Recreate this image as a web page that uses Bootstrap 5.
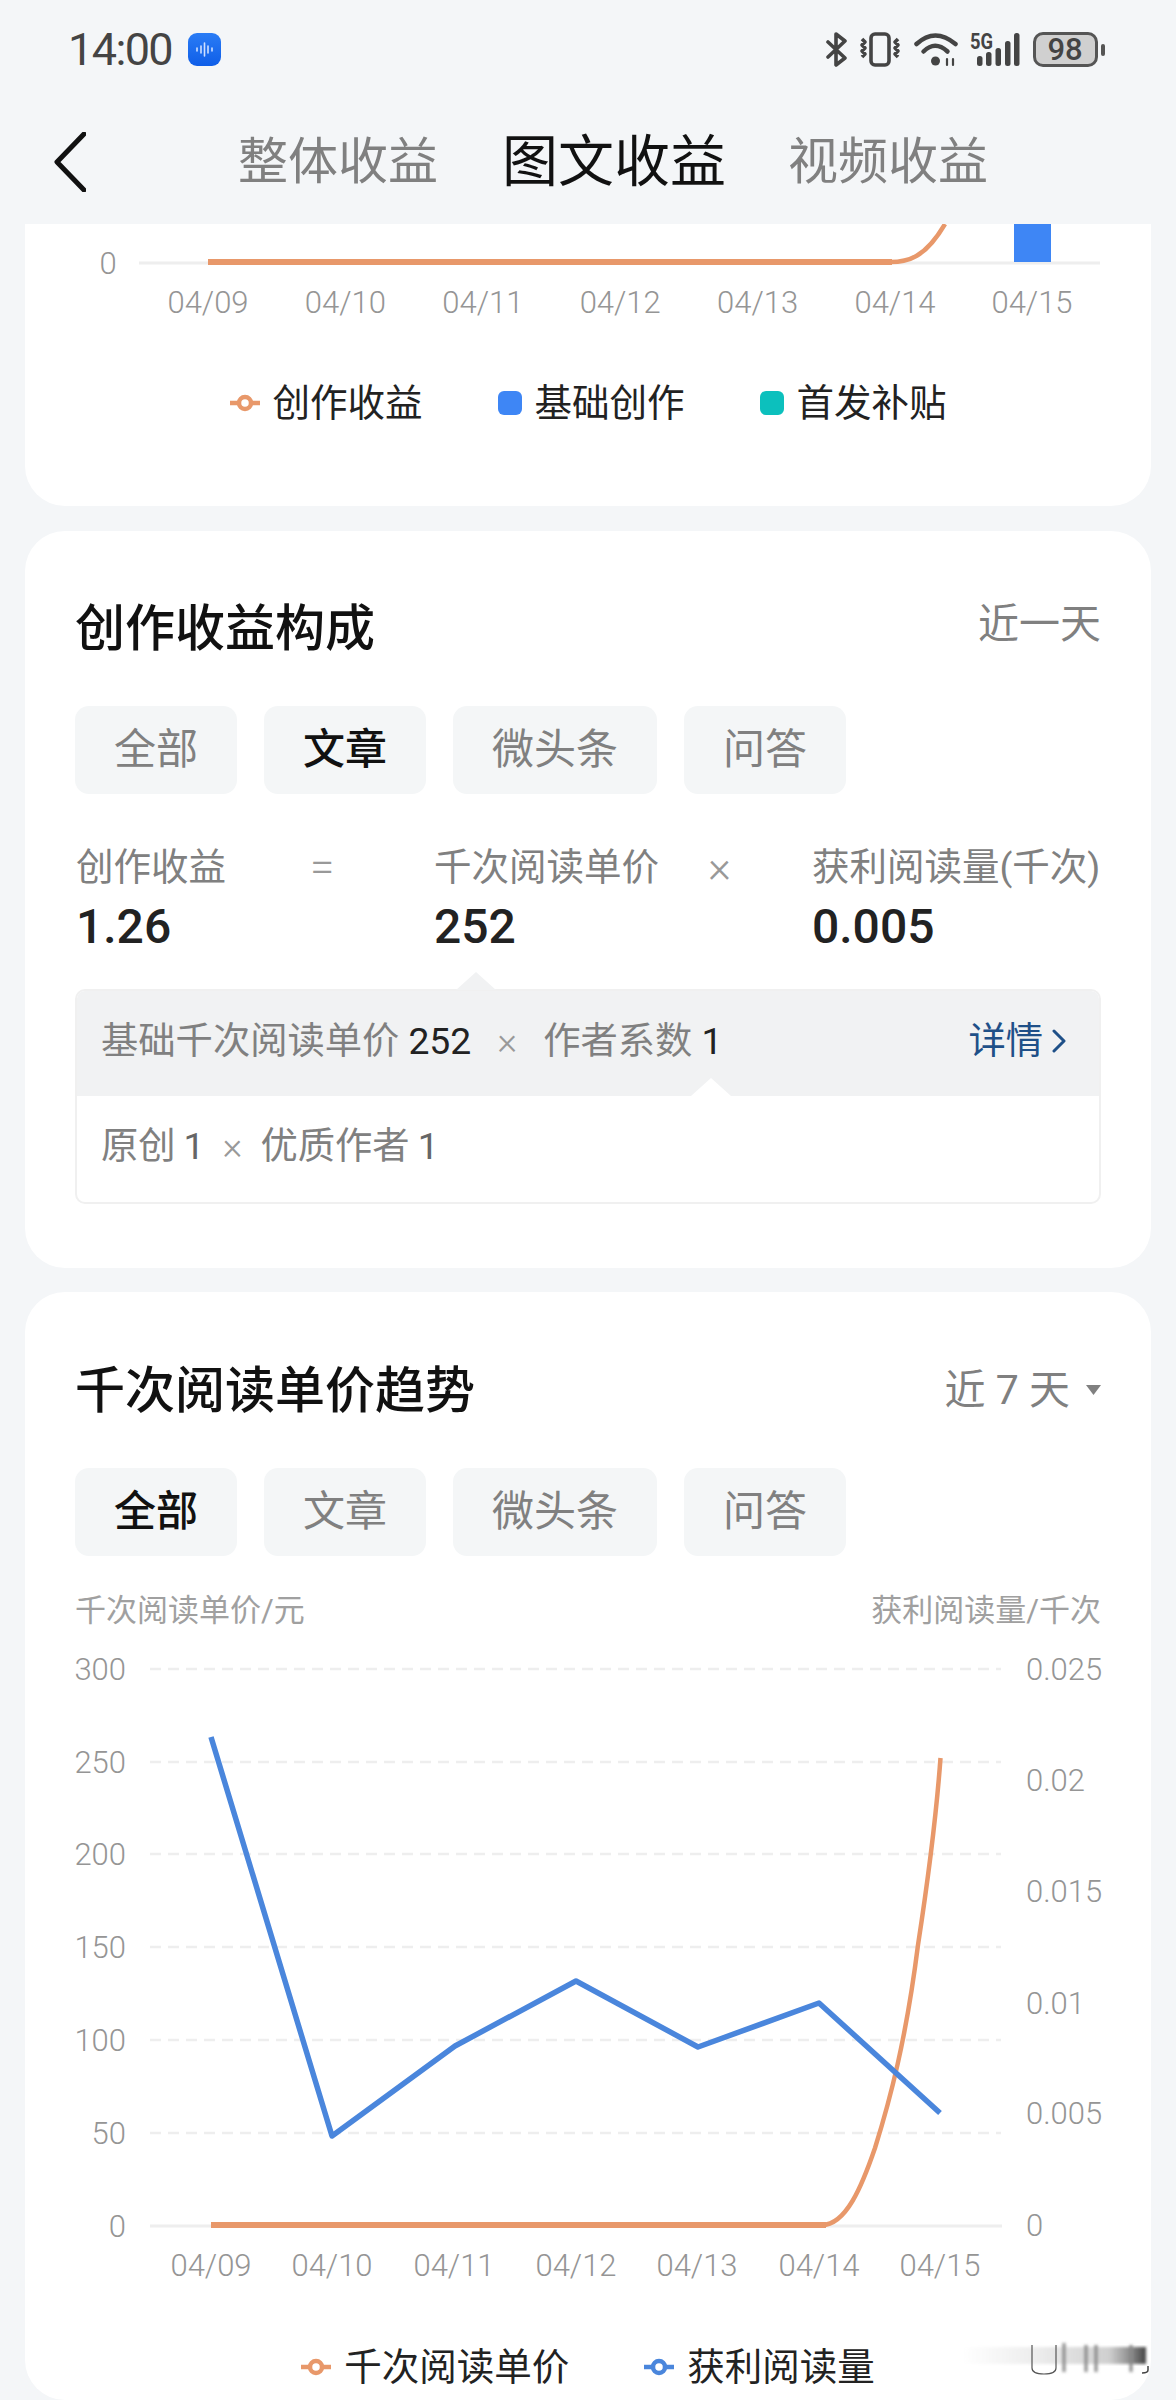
<!DOCTYPE html>
<html lang="zh-CN">
<head>
    <meta charset="UTF-8">
    <meta name="viewport" content="width=device-width, initial-scale=1.0">
    <title>图文收益</title>
    <link href="https://cdn.jsdelivr.net/npm/bootstrap@5.3.0/dist/css/bootstrap.min.css" rel="stylesheet">
    <style>
        body {
            width: 1176px;
            height: 2400px;
            overflow: hidden;
            background: #f4f6f8;
            font-family: Roboto, "Noto Sans CJK SC", sans-serif;
            color: #808080;
        }
        .status-row { height: 100px; padding: 32px 71px 0 68px; }
        .clock { font-size: 45px; line-height: 35px; color: #444; letter-spacing: -1.6px; margin-right: 16px; }
        .voice-dot { width: 33px; height: 33px; border-radius: 9px; background: linear-gradient(180deg, #2a7cf5, #0f5ee8); }
        .status-icons { gap: 12.5px; }
        .signal-icon { margin-top: -6px; }
        .batt-body {
            width: 65px; height: 35px; border: 3px solid #555; border-radius: 10px;
            background: #d0d0d0; color: #444; font-size: 31px; font-weight: 500; line-height: 1;
        }
        .batt-nub { width: 4px; height: 12px; border-radius: 2px; background: #555; margin-left: -9px; }
        .head-row { height: 124px; padding-left: 54px; }
        .back-btn { width: 32px; margin-right: 152px; }
        .tab-item { font-size: 50px; line-height: 60px; color: #808080; margin-right: 63px; }
        .tab-on { font-size: 56px; color: #111; margin-left: 1px; margin-right: 62px; }
        .panel { margin: 0 25px 24px; border-radius: 40px; background: #fff; }
        .panel-top { height: 282px; border-radius: 0 0 40px 40px; margin-bottom: 25px; }
        .panel-mid { height: 737px; padding: 67px 50px 0; }
        .panel-end { padding: 68px 50px 0; height: 1108px; margin-bottom: 0; }
        .chart-svg { display: block; }
        .chart-top { height: 154px; }
        .axis-txt { font-size: 31px; fill: #959595; font-family: Roboto, sans-serif; font-weight: 300; }
        .legend-row { height: 50px; gap: 75px; font-size: 37.5px; line-height: 50px; color: #222; }
        .legend-item { gap: 13px; }
        .legend-sq { width: 24px; height: 24px; border-radius: 6px; }
        .title-row { height: 60px; }
        .sec-title { font-size: 50px; line-height: 60px; font-weight: 500; color: #111; padding-top: 2px; }
        .range-txt { font-size: 41px; line-height: 50px; color: #808080; }
        .range-caret { width: 15px; height: 10px; margin-left: 16px; }
        .pill-row { gap: 27px; margin-top: 48px; }
        .pill-btn {
            height: 88px; padding: 0 39px; border: 0; border-radius: 14px;
            background: #f4f6f7; color: #808080; font-size: 42px; line-height: 88px;
        }
        .pill-on { color: #111; font-weight: 500; }
        .formula-grid {
            display: grid;
            grid-template-columns: 234px 124px 274px 104px 1fr;
            margin-top: 48px;
            margin-left: 1px;
            font-size: 37.5px;
            line-height: 50px;
            color: #808080;
        }
        .formula-op { font-size: 44px; font-weight: 300; color: #999; }
        .formula-num { font-size: 48px; line-height: 60px; font-weight: 500; color: #222; margin-top: 5px; }
        .detail-box {
            margin-top: 32px;
            border: 2px solid #f0f0f0;
            border-radius: 10px;
            font-size: 37.3px;
            line-height: 50px;
            color: #808080;
        }
        .box-top { height: 105px; padding: 0 33px 6px 24px; background: #f1f2f3; border-radius: 8px 8px 0 0; }
        .box-low { height: 106px; padding: 0 24px 6px; }
        .box-num { color: #222; margin-left: 9px; }
        .box-num-soft { color: #666; margin-left: 8px; }
        .box-times { color: #999; margin: 0 26px; font-size: 38px; font-weight: 300; }
        .box-times-sm { margin: 0 18px; }
        .more-link { color: #1f5088; text-decoration: none; }
        .notch-up {
            position: absolute; left: 379px; top: -19px; width: 40px; height: 18px;
            background: #f1f2f3; clip-path: polygon(50% 0, 100% 100%, 0 100%);
        }
        .notch-in {
            position: absolute; left: 614px; top: 87px; width: 40px; height: 18px;
            background: #fff; clip-path: polygon(50% 0, 100% 100%, 0 100%);
        }
        .axis-title { margin-top: 35px; height: 40px; font-size: 31px; line-height: 40px; color: #a0a0a0; }
        .chart-end { height: 711px; margin-left: -50px; }
        .blur-mark { position: absolute; left: 960px; top: 2340px; }
    </style>
</head>
<body class="position-relative">

    <div class="status-row d-flex justify-content-between align-items-start">
        <div class="d-flex align-items-center">
            <span class="clock">14:00</span>
            <span class="voice-dot d-flex align-items-center justify-content-center">
                <svg width="19" height="17" viewBox="0 0 19 17" stroke="#cfe0ff" stroke-width="1.600" stroke-linecap="round">
                    <path d="M2 7v3M6 5v7M9.500 2v13M13 5v7M17 7v3"/>
                </svg>
            </span>
        </div>
        <div class="status-icons d-flex align-items-end">
            <svg width="21" height="35" viewBox="0 0 21 35" fill="none" stroke="#444" stroke-width="3.600" stroke-linecap="round" stroke-linejoin="round">
                <path d="M2 10 L19 26 L10 33 V2 L19 9 L2 25"/>
            </svg>
            <svg width="42" height="35" viewBox="0 0 42 35" fill="none" stroke="#444" stroke-width="3.600" stroke-linejoin="round">
                <rect x="12" y="2" width="18" height="31" rx="4"/>
                <path d="M3 7l3 3-3 3 3 3-3 3 3 3-3 3M39 7l-3 3 3 3-3 3 3 3-3 3 3 3"/>
            </svg>
            <svg width="44" height="35" viewBox="0 0 44 35" fill="none" stroke="#444" stroke-width="4.500" stroke-linecap="round">
                <path d="M2.500 12 Q21 -5 41.500 12"/>
                <path d="M9.500 19.500 Q21 8 33.500 19.500"/>
                <circle cx="21.500" cy="29" r="4.500" fill="#444" stroke="none"/>
                <path d="M33 27v6M39 27v6" stroke-width="2.200"/>
            </svg>
            <svg class="signal-icon" width="50" height="41" viewBox="0 -6 50 41" fill="#444">
                <text x="0" y="17" font-family="Roboto, sans-serif" font-size="22" font-weight="700" textLength="23" lengthAdjust="spacingAndGlyphs">5G</text>
                <rect x="7" y="24" width="5.500" height="10" rx="2.500"/>
                <rect x="16" y="20" width="5.500" height="14" rx="2.500"/>
                <rect x="25.500" y="16" width="5.500" height="18" rx="2.500"/>
                <rect x="35" y="9" width="5.500" height="25" rx="2.500"/>
                <rect x="44" y="1" width="5.500" height="33" rx="2.500"/>
            </svg>
            <span class="batt-body d-flex align-items-center justify-content-center">98</span>
            <span class="batt-nub align-self-center"></span>
        </div>
    </div>

    <div class="head-row d-flex align-items-center">
        <svg class="back-btn" height="60" viewBox="0 0 32 60" fill="none" stroke="#111" stroke-width="5" stroke-linecap="round" stroke-linejoin="round">
            <path d="M30 2 L3 30 L30 58"/>
        </svg>
        <span class="tab-item">整体收益</span>
        <span class="tab-item tab-on">图文收益</span>
        <span class="tab-item">视频收益</span>
    </div>

    <div class="card panel panel-top border-0 d-block overflow-hidden">
        <svg class="chart-svg chart-top" width="1125" height="154" viewBox="25 224 1125 154" fill="none">
            <line x1="139" y1="263" x2="1100" y2="263" stroke="#eeeeee" stroke-width="3"/>
            <rect x="1014" y="224" width="37" height="38" fill="#3e86f5"/>
            <path d="M208 262 H892" stroke="#e8986a" stroke-width="6"/>
            <path d="M890 262 C908 262 925 258 945 224" stroke="#e8986a" stroke-width="4.500"/>
            <text class="axis-txt" x="108" y="274" text-anchor="middle">0</text>
            <text class="axis-txt" x="208" y="313" text-anchor="middle">04/09</text>
            <text class="axis-txt" x="345.400" y="313" text-anchor="middle">04/10</text>
            <text class="axis-txt" x="482.800" y="313" text-anchor="middle">04/11</text>
            <text class="axis-txt" x="620.200" y="313" text-anchor="middle">04/12</text>
            <text class="axis-txt" x="757.600" y="313" text-anchor="middle">04/13</text>
            <text class="axis-txt" x="895" y="313" text-anchor="middle">04/14</text>
            <text class="axis-txt" x="1032" y="313" text-anchor="middle">04/15</text>
        </svg>
        <div class="legend-row d-flex justify-content-center">
            <div class="legend-item d-flex align-items-center">
                <svg width="30" height="18" viewBox="0 0 30 18" fill="#fff" stroke="#e8986a" stroke-width="4.500">
                    <path d="M0 9H30"/><circle cx="15" cy="9" r="6"/>
                </svg>
                创作收益
            </div>
            <div class="legend-item d-flex align-items-center">
                <span class="legend-sq" style="background:#3e86f5"></span>基础创作
            </div>
            <div class="legend-item d-flex align-items-center">
                <span class="legend-sq" style="background:#0cc0bd"></span>首发补贴
            </div>
        </div>
    </div>

    <div class="card panel panel-mid border-0 d-block">
        <div class="title-row d-flex justify-content-between align-items-center">
            <div class="sec-title">创作收益构成</div>
            <div class="range-txt mb-2">近一天</div>
        </div>
        <div class="pill-row d-flex">
            <button class="btn pill-btn">全部</button>
            <button class="btn pill-btn pill-on">文章</button>
            <button class="btn pill-btn">微头条</button>
            <button class="btn pill-btn">问答</button>
        </div>
        <div class="formula-grid">
            <div>创作收益</div><div class="formula-op">=</div><div>千次阅读单价</div><div class="formula-op">×</div><div class="text-nowrap">获利阅读量(千次)</div>
            <div class="formula-num">1.26</div><div></div><div class="formula-num">252</div><div></div><div class="formula-num">0.005</div>
        </div>
        <div class="detail-box position-relative">
            <span class="notch-up"></span>
            <div class="box-top d-flex align-items-center">
                <span>基础千次阅读单价</span><span class="box-num">252</span>
                <span class="box-times">×</span>
                <span>作者系数</span><span class="box-num">1</span>
                <a class="more-link ms-auto d-flex align-items-center gap-2" href="#">详情
                    <svg width="15" height="24" viewBox="0 0 15 24" fill="none" stroke="#1f5088" stroke-width="3" stroke-linecap="round" stroke-linejoin="round">
                        <path d="M3 2 L13 12 L3 22"/>
                    </svg>
                </a>
            </div>
            <span class="notch-in"></span>
            <div class="box-low d-flex align-items-center">
                <span>原创</span><span class="box-num-soft">1</span>
                <span class="box-times box-times-sm">×</span>
                <span>优质作者</span><span class="box-num-soft">1</span>
            </div>
        </div>
    </div>

    <div class="card panel panel-end border-0 d-block">
        <div class="title-row d-flex justify-content-between align-items-center">
            <div class="sec-title">千次阅读单价趋势</div>
            <div class="range-txt d-flex align-items-center">近 7 天
                <svg class="range-caret" viewBox="0 0 15 10" fill="#808080"><path d="M0 0H15L7.500 10Z"/></svg>
            </div>
        </div>
        <div class="pill-row d-flex">
            <button class="btn pill-btn pill-on">全部</button>
            <button class="btn pill-btn">文章</button>
            <button class="btn pill-btn">微头条</button>
            <button class="btn pill-btn">问答</button>
        </div>
        <div class="axis-title d-flex justify-content-between">
            <span>千次阅读单价/元</span><span>获利阅读量/千次</span>
        </div>
        <svg class="chart-svg chart-end" width="1125" height="711" viewBox="25 1631 1125 711" fill="none">
            <g stroke="#eeeeee" stroke-width="2.500" stroke-dasharray="11 7">
                <line x1="150" y1="1669" x2="1001" y2="1669"/>
                <line x1="150" y1="1762" x2="1001" y2="1762"/>
                <line x1="150" y1="1854" x2="1001" y2="1854"/>
                <line x1="150" y1="1947" x2="1001" y2="1947"/>
                <line x1="150" y1="2040" x2="1001" y2="2040"/>
                <line x1="150" y1="2133" x2="1001" y2="2133"/>
            </g>
            <line x1="150" y1="2226" x2="1002" y2="2226" stroke="#eeeeee" stroke-width="3"/>
            <path d="M822 2225 C846 2225 862 2186 875 2148 C890 2100 906 2040 918 1945 C928 1880 936 1820 940.500 1758" stroke="#e8986a" stroke-width="4.500"/>
            <path d="M211 2225 H826" stroke="#e8986a" stroke-width="6"/>
            <polyline points="211,1737 332,2136 455,2046 576,1981 698,2047 819,2003 940,2113" stroke="#4a86dc" stroke-width="5.500" stroke-linejoin="round"/>
            <g text-anchor="end">
                <text class="axis-txt" x="126" y="1680">300</text>
                <text class="axis-txt" x="126" y="1773">250</text>
                <text class="axis-txt" x="126" y="1865">200</text>
                <text class="axis-txt" x="126" y="1958">150</text>
                <text class="axis-txt" x="126" y="2051">100</text>
                <text class="axis-txt" x="126" y="2144">50</text>
                <text class="axis-txt" x="126" y="2237">0</text>
            </g>
            <text class="axis-txt" x="1026" y="1680">0.025</text>
            <text class="axis-txt" x="1026" y="1791">0.02</text>
            <text class="axis-txt" x="1026" y="1902">0.015</text>
            <text class="axis-txt" x="1026" y="2014">0.01</text>
            <text class="axis-txt" x="1026" y="2124">0.005</text>
            <text class="axis-txt" x="1026" y="2236">0</text>
            <g text-anchor="middle">
                <text class="axis-txt" x="211" y="2276">04/09</text>
                <text class="axis-txt" x="332" y="2276">04/10</text>
                <text class="axis-txt" x="454" y="2276">04/11</text>
                <text class="axis-txt" x="576" y="2276">04/12</text>
                <text class="axis-txt" x="697" y="2276">04/13</text>
                <text class="axis-txt" x="819" y="2276">04/14</text>
                <text class="axis-txt" x="940" y="2276">04/15</text>
            </g>
        </svg>
        <div class="legend-row d-flex justify-content-center">
            <div class="legend-item d-flex align-items-center">
                <svg width="30" height="18" viewBox="0 0 30 18" fill="#fff" stroke="#e8986a" stroke-width="4.500">
                    <path d="M0 9H30"/><circle cx="15" cy="9" r="6"/>
                </svg>
                千次阅读单价
            </div>
            <div class="legend-item d-flex align-items-center">
                <svg width="30" height="18" viewBox="0 0 30 18" fill="#fff" stroke="#4a86dc" stroke-width="4.500">
                    <path d="M0 9H30"/><circle cx="15" cy="9" r="6"/>
                </svg>
                获利阅读量
            </div>
        </div>
    </div>

    <!-- smudged watermark over the bottom right corner -->
    <svg class="blur-mark" width="190" height="40" viewBox="960 2340 190 40" fill="none">
        <defs>
            <linearGradient id="smudgeFade" x1="0" x2="1" y1="0" y2="0">
                <stop offset="0" stop-color="#ffffff"/>
                <stop offset="0.4" stop-color="#ededed"/>
                <stop offset="0.8" stop-color="#cfcfcf"/>
                <stop offset="0.92" stop-color="#8a8a8a"/>
                <stop offset="1" stop-color="#444444"/>
            </linearGradient>
            <filter id="smudgeBlur"><feGaussianBlur stdDeviation="1.500"/></filter>
        </defs>
        <rect x="962" y="2347" width="184" height="17" fill="url(#smudgeFade)" filter="url(#smudgeBlur)"/>
        <path d="M1032 2345 V2368 Q1032 2374 1044 2374 Q1056 2374 1056 2368 V2345" stroke="#555" stroke-width="1.200"/>
        <g stroke="#888" stroke-width="3" filter="url(#smudgeBlur)">
            <path d="M1064 2343V2372M1086 2345V2372M1096 2345V2372M1131 2345V2372"/>
        </g>
        <path d="M1148 2366 V2370 Q1148 2373 1142 2373" stroke="#444" stroke-width="1.500"/>
    </svg>

</body>
</html>
